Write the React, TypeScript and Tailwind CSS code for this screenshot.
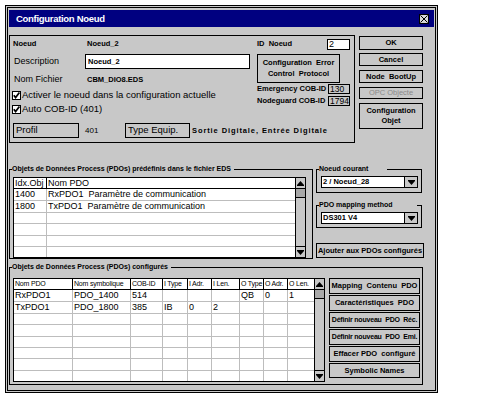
import React from "react";

const FONT = "font-['Liberation_Sans',Arial,sans-serif]";

function Check() {
  return (
    <svg width="9" height="9" viewBox="0 0 9 9" className="shrink-0">
      <rect x="0.5" y="0.5" width="8" height="8" fill="#fff" stroke="#000" />
      <path d="M1.8 4.2 L3.6 6.6 L7.4 1.6" fill="none" stroke="#000" strokeWidth="1.7" />
    </svg>
  );
}

function UpArrow() {
  return (
    <svg width="7" height="5" viewBox="0 0 7 5">
      <path d="M3.5 0 L7 4 L0 4 Z" fill="#000" />
      <rect x="0" y="4" width="7" height="1" fill="#000" />
    </svg>
  );
}

function DownArrow() {
  return (
    <svg width="7" height="5" viewBox="0 0 7 5">
      <rect x="0" y="0" width="7" height="1" fill="#000" />
      <path d="M0 1 L7 1 L3.5 5 Z" fill="#000" />
    </svg>
  );
}

function VScroll() {
  return (
    <div className="w-[10px] border-l border-black bg-[#c8c8c8] flex flex-col shrink-0">
      <div className="h-[11px] border-b border-black flex items-center justify-center">
        <UpArrow />
      </div>
      <div className="h-[9px] border-b border-black bg-[#a8a8a8]" />
      <div className="flex-1" />
      <div className="h-[11px] border-t border-black flex items-center justify-center">
        <DownArrow />
      </div>
    </div>
  );
}

function Combo({ text }: { text: string }) {
  return (
    <div className="w-[97px] h-[12px] border border-black bg-white flex">
      <div className="flex-1 pl-px text-[7.5px] leading-[10px] font-bold whitespace-nowrap">{text}</div>
      <div className="w-[13px] border-l border-black bg-[#c8c8c8] flex items-center justify-center">
        <DownArrow />
      </div>
    </div>
  );
}

function Group({
  label,
  className,
  labelPad,
  children,
}: {
  label: string;
  className: string;
  labelPad: string;
  children: React.ReactNode;
}) {
  return (
    <div className={`relative border border-black shrink-0 ${className}`}>
      <span
        className={`absolute left-[2px] -top-[6px] bg-[#c8c8c8] font-bold text-[7px] leading-[10px] whitespace-nowrap ${labelPad}`}
      >
        {label}
      </span>
      {children}
    </div>
  );
}

function Btn({ children, className }: { children: React.ReactNode; className: string }) {
  return (
    <div
      className={`border border-black shrink-0 flex flex-col items-center justify-center text-center font-bold leading-[10px] whitespace-nowrap ${className}`}
    >
      {children}
    </div>
  );
}

const edsRows: [string, string][] = [
  ["1400", "RxPDO1  Paramètre de communication"],
  ["1800", "TxPDO1  Paramètre de communication"],
  ["", ""],
  ["", ""],
  ["", ""],
  ["", ""],
];

const cfgCols: { name: string; w: string }[] = [
  { name: "Nom PDO", w: "w-[59px] border-r" },
  { name: "Nom symbolique", w: "w-[58px] border-r" },
  { name: "COB-ID", w: "w-[32px] border-r" },
  { name: "I Type", w: "w-[25px] border-r" },
  { name: "I Adr.", w: "w-[24px] border-r" },
  { name: "I Len.", w: "w-[28px] border-r" },
  { name: "O Type", w: "w-[24px] border-r" },
  { name: "O Adr.", w: "w-[24px] border-r" },
  { name: "O Len.", w: "w-[26px]" },
];

const cfgRows: string[][] = [
  ["RxPDO1", "PDO_1400", "514", "", "", "", "QB", "0", "1"],
  ["TxPDO1", "PDO_1800", "385", "IB", "0", "2", "", "", ""],
  ["", "", "", "", "", "", "", "", ""],
  ["", "", "", "", "", "", "", "", ""],
  ["", "", "", "", "", "", "", "", ""],
  ["", "", "", "", "", "", "", "", ""],
  ["", "", "", "", "", "", "", "", ""],
  ["", "", "", "", "", "", "", "", ""],
];

export default function App() {
  return (
    <div className={`w-[490px] h-[402px] bg-white pt-[5px] pl-[5px] text-black ${FONT}`}>
      <div className="w-[433px] h-[388px] border border-black bg-[#c8c8c8] p-px">
        <div className="h-full border border-black px-px pt-[2px] flex flex-col">
          {/* Title bar */}
          <div className="h-[17px] bg-[#000080] flex items-center pl-[7px] pr-[5px] shrink-0">
            <span className="flex-1 text-white font-bold text-[9.5px] tracking-[-0.3px] leading-none">
              Configuration Noeud
            </span>
            <div className="w-[10px] h-[10px] border border-black bg-[#d8d8d8] flex items-center justify-center">
              <svg width="8" height="8" viewBox="0 0 8 8">
                <path d="M0.5 0.5 L7.5 7.5 M7.5 0.5 L0.5 7.5" stroke="#000" strokeWidth="1" />
              </svg>
            </div>
          </div>

          {/* Top section */}
          <div className="mt-[8px] flex shrink-0">
            <div className="w-[346px] h-[108px] border border-black flex pl-[3px] pt-px shrink-0">
              {/* left column */}
              <div className="w-[244px] shrink-0 flex flex-col">
                <div className="h-[14px] flex items-center">
                  <span className="w-[74px] shrink-0 font-bold text-[7.5px]">Noeud</span>
                  <span className="font-bold text-[7.5px]">Noeud_2</span>
                </div>
                <div className="mt-[3px] h-[15px] flex items-center">
                  <span className="w-[72px] shrink-0 pl-px text-[9px]">Description</span>
                  <div className="w-[165px] h-[15px] shrink-0 border border-black bg-white flex items-center pl-[2px] font-bold text-[7.5px]">
                    Noeud_2
                  </div>
                </div>
                <div className="mt-[4px] h-[14px] flex items-center">
                  <span className="w-[74px] shrink-0 pl-px text-[9px]">Nom Fichier</span>
                  <span className="font-bold text-[7.5px]">CBM_DIO8.EDS</span>
                </div>
                <div className="mt-px h-[14px] flex items-center -ml-px gap-px">
                  <Check />
                  <span className="text-[9.5px] whitespace-nowrap">Activer le noeud dans la configuration actuelle</span>
                </div>
                <div className="h-[14px] flex items-center -ml-px gap-px">
                  <Check />
                  <span className="text-[9.5px] whitespace-nowrap">Auto COB-ID (401)</span>
                </div>
                <div className="mt-[7px] h-[15px] flex items-center">
                  <div className="w-[66px] h-[15px] shrink-0 border border-black flex items-center pl-[2px] text-[9.5px] whitespace-nowrap">
                    Profil
                  </div>
                  <span className="ml-[6px] w-[40px] shrink-0 text-[8px]">401</span>
                  <div className="w-[65px] h-[15px] shrink-0 border border-black flex items-center pl-[2px] text-[9.5px] whitespace-nowrap">
                    Type Equip.
                  </div>
                  <span className="ml-[2px] shrink-0 font-bold text-[7.5px] tracking-[0.9px] whitespace-nowrap">
                    Sortie Digitale, Entrée Digitale
                  </span>
                </div>
              </div>
              {/* right column */}
              <div className="w-[93px] shrink-0 flex flex-col">
                <div className="mt-px h-[12px] flex items-center justify-between">
                  <span className="font-bold text-[7.5px]">ID&nbsp; Noeud</span>
                  <div className="w-[23px] h-[11px] border border-black bg-white flex items-center pl-px text-[9px] leading-none">
                    2
                  </div>
                </div>
                <Btn className="mt-[4px] w-[83px] h-[29px] gap-px text-[7.5px]">
                  <span>Configuration&nbsp; Error</span>
                  <span>Control&nbsp; Protocol</span>
                </Btn>
                <div className="h-[10px] mt-px flex items-center justify-between">
                  <span className="font-bold text-[7.5px]">Emergency COB-ID</span>
                  <div className="w-[22px] h-[10px] border border-black flex items-center pl-px text-[8.5px] leading-none">
                    130
                  </div>
                </div>
                <div className="h-[10px] mt-[2px] flex items-center justify-between">
                  <span className="font-bold text-[7.5px]">Nodeguard COB-ID</span>
                  <div className="w-[22px] h-[10px] border border-black flex items-center pl-px text-[8.5px] leading-none">
                    1794
                  </div>
                </div>
              </div>
            </div>
            {/* buttons */}
            <div className="ml-[4px] w-[64px] pt-px flex flex-col shrink-0">
              <Btn className="h-[14px] text-[7.5px]">OK</Btn>
              <Btn className="mt-[3px] h-[13px] text-[7.5px]">Cancel</Btn>
              <Btn className="mt-[4px] h-[13px] text-[7.5px]">Node&nbsp; BootUp</Btn>
              <Btn className="mt-[4px] h-[12px] text-[7.5px] text-[#8a8a8a] font-normal">OPC Objecte</Btn>
              <Btn className="mt-[4px] h-[26px] text-[7.5px]">
                <span>Configuration</span>
                <span>Objet</span>
              </Btn>
            </div>
          </div>

          {/* Middle section */}
          <div className="mt-[26px] flex shrink-0">
            <Group
              label="Objets de Données Process (PDOs) prédéfinis dans le fichier EDS"
              className="w-[304px] h-[90px] pl-[3px] pt-[7px]"
              labelPad="pr-[3px]"
            >
              <div className="w-[293px] h-[81px] border border-black bg-white flex">
                <div className="flex-1 flex flex-col">
                  <div className="h-[11px] flex border-b border-black text-[9px] leading-[10px]">
                    <div className="w-[33px] shrink-0 border-r border-black pl-px">Idx.Obj</div>
                    <div className="flex-1 pl-px">Nom PDO</div>
                  </div>
                  {edsRows.map((r, i) => (
                    <div
                      key={i}
                      className="flex-1 flex border-b border-[#bdbdbd] last:border-b-0 text-[9px] leading-[11px]"
                    >
                      <div className="w-[33px] shrink-0 border-r border-[#bdbdbd] pl-px">{r[0]}</div>
                      <div className="flex-1 pl-px whitespace-pre">{r[1]}</div>
                    </div>
                  ))}
                </div>
                <VScroll />
              </div>
            </Group>

            <div className="ml-[3px] w-[107px] flex flex-col shrink-0">
              <Group label="Noeud courant" className="w-[106px] h-[24px] pl-[4px] pt-[6px]" labelPad="pr-[19px]">
                <Combo text="2 / Noeud_28" />
              </Group>
              <Group label="PDO mapping method" className="mt-[12px] w-[106px] h-[23px] pl-[4px] pt-[6px]" labelPad="pr-[24px]">
                <Combo text="DS301 V4" />
              </Group>
              <Btn className="mt-[15px] w-[108px] h-[15px] text-[7.5px]">Ajouter aux PDOs configurés</Btn>
            </div>
          </div>

          {/* Bottom section */}
          <div className="mt-[8px] shrink-0">
            <Group
              label="Objets de Données Process (PDOs) configurés"
              className="w-[414px] h-[118px] pl-[3px] pt-[10px] flex items-start"
              labelPad="pr-[3px]"
            >
              <div className="w-[312px] h-[104px] shrink-0 border border-black bg-white flex">
                <div className="flex-1 flex flex-col">
                  <div className="h-[11px] flex border-b border-black text-[7px] tracking-[-0.2px] leading-[10px]">
                    {cfgCols.map((c) => (
                      <div key={c.name} className={`${c.w} shrink-0 border-black pl-px whitespace-nowrap overflow-hidden`}>
                        {c.name}
                      </div>
                    ))}
                  </div>
                  {cfgRows.map((r, i) => (
                    <div key={i} className="flex-1 flex border-b border-[#bdbdbd] last:border-b-0 text-[9px] leading-[11px]">
                      {r.map((v, j) => (
                        <div key={j} className={`${cfgCols[j].w} shrink-0 border-[#bdbdbd] pl-px whitespace-nowrap`}>
                          {v}
                        </div>
                      ))}
                    </div>
                  ))}
                </div>
                <VScroll />
              </div>
              <div className="ml-[4px] w-[91px] flex flex-col gap-px shrink-0">
                <Btn className="h-[16px] text-[7.5px]">Mapping&nbsp; Contenu&nbsp; PDO</Btn>
                <Btn className="h-[16px] text-[7.5px]">Caractéristiques&nbsp; PDO</Btn>
                <Btn className="h-[16px] text-[7px] tracking-[-0.2px]">Définir nouveau&nbsp; PDO&nbsp; Réc.</Btn>
                <Btn className="h-[16px] text-[7px] tracking-[-0.2px]">Définir nouveau&nbsp; PDO&nbsp; Emi.</Btn>
                <Btn className="h-[16px] text-[7.5px]">Effacer PDO&nbsp; configuré</Btn>
                <Btn className="h-[15px] text-[7.5px]">Symbolic Names</Btn>
              </div>
            </Group>
          </div>
        </div>
      </div>
    </div>
  );
}
